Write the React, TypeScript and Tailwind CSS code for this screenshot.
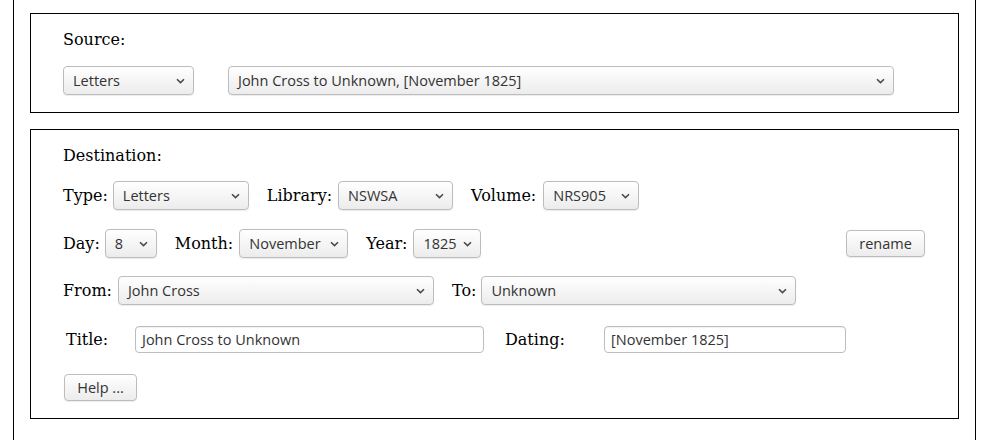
import React from 'react';

const serif = "font-['DejaVu_Serif',serif] text-[16px] leading-[24px] text-black";
const ui = "font-['Open_Sans',sans-serif] text-[14.5px] text-[#333]";

function Chevron() {
  return (
    <svg width="9" height="6" viewBox="0 0 9 6" className="shrink-0">
      <path d="M1 1.2 L4.5 4.6 L8 1.2" fill="none" stroke="#4a4a4a" strokeWidth="1.6" />
    </svg>
  );
}

function Select({ value, width }: { value: string; width: string }) {
  return (
    <div
      className={`${ui} ${width} h-[29px] flex items-center justify-between pl-[9px] pr-[8px] rounded-[4px] border border-[#bdbdbd] bg-gradient-to-b from-white to-[#ececec] shadow-[0_1px_1px_rgba(0,0,0,0.08)] shrink-0`}
    >
      <span className="whitespace-nowrap">{value}</span>
      <Chevron />
    </div>
  );
}

function Button({ label, width }: { label: string; width: string }) {
  return (
    <div
      className={`${ui} ${width} h-[27px] flex items-center justify-center rounded-[4px] border border-[#bdbdbd] bg-gradient-to-b from-white to-[#ececec] shadow-[0_1px_1px_rgba(0,0,0,0.08)] shrink-0`}
    >
      {label}
    </div>
  );
}

function Input({ value, width }: { value: string; width: string }) {
  return (
    <div
      className={`${ui} ${width} h-[27px] flex items-center px-[6px] rounded-[4px] border border-[#bdbdbd] bg-white shadow-[inset_0_1px_1px_rgba(0,0,0,0.06)] shrink-0`}
    >
      {value}
    </div>
  );
}

export default function App() {
  return (
    <div className="bg-white w-[988px] h-[440px] overflow-hidden">
      <div className="ml-[13px] w-[963px] h-[440px] border-x border-black px-4 pt-[13px]">
        {/* Source */}
        <div className="border border-black h-[100px] pl-[32px] pr-[32px] pt-[14px]">
          <div className={serif}>Source:</div>
          <div className="flex items-center mt-[14px]">
            <Select value="Letters" width="w-[131px]" />
            <div className="ml-[34px]">
              <Select value="John Cross to Unknown, [November 1825]" width="w-[666px]" />
            </div>
          </div>
        </div>

        {/* Destination */}
        <div className="border border-black h-[290px] mt-4 pl-[32px] pr-[33px] pt-[14px]">
          <div className={serif}>Destination:</div>

          <div className="flex items-center mt-[13px]">
            <span className={`${serif} mr-[5px]`}>Type:</span>
            <Select value="Letters" width="w-[136px]" />
            <span className={`${serif} ml-[18px] mr-[6px]`}>Library:</span>
            <Select value="NSWSA" width="w-[115px]" />
            <span className={`${serif} ml-[18px] mr-[7px]`}>Volume:</span>
            <Select value="NRS905" width="w-[96px]" />
          </div>

          <div className="flex items-center mt-[19px]">
            <span className={`${serif} mr-[5px]`}>Day:</span>
            <Select value="8" width="w-[52px]" />
            <span className={`${serif} ml-[18px] mr-[6px]`}>Month:</span>
            <Select value="November" width="w-[109px]" />
            <span className={`${serif} ml-[18px] mr-[6px]`}>Year:</span>
            <Select value="1825" width="w-[68px]" />
            <div className="ml-auto">
              <Button label="rename" width="w-[79px]" />
            </div>
          </div>

          <div className="flex items-center mt-[18px]">
            <span className={`${serif} mr-[6px]`}>From:</span>
            <Select value="John Cross" width="w-[316px]" />
            <span className={`${serif} ml-[18px] mr-[5px]`}>To:</span>
            <Select value="Unknown" width="w-[315px]" />
          </div>

          <div className="flex items-center mt-[21px]">
            <span className={`${serif} w-[72px] pl-[3px]`}>Title:</span>
            <Input value="John Cross to Unknown" width="w-[349px]" />
            <span className={`${serif} w-[120px] pl-[21px]`}>Dating:</span>
            <Input value="[November 1825]" width="w-[242px]" />
          </div>

          <div className="mt-[21px] pl-[1px]">
            <Button label="Help ..." width="w-[73px]" />
          </div>
        </div>
      </div>
    </div>
  );
}
